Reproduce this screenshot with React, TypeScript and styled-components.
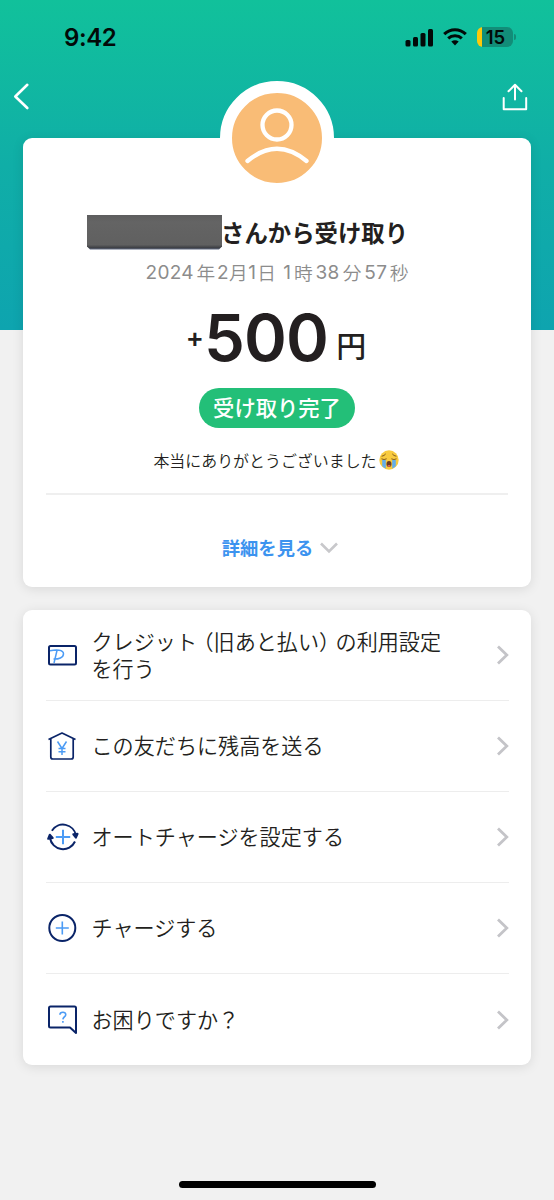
import React from "react";
import styled, { createGlobalStyle } from "styled-components";

const latin = `Inter, "Noto Sans CJK JP", sans-serif`;
const japanese = `"Noto Sans CJK JP", sans-serif`;

const GlobalStyle = createGlobalStyle`
  * { box-sizing: border-box; }
  body { margin: 0; background: #f1f1f1; }
`;

const Screen = styled.div`
  width: 554px;
  height: 1200px;
  display: flex;
  flex-direction: column;
  overflow: hidden;
  font-family: ${japanese};
  color: #231f20;
  background: linear-gradient(#11c19b, #10aea7 50%, #0ea4af) 0 0 / 100% 330px no-repeat #f1f1f1;
`;

const StatusBar = styled.div`
  height: 74px;
  padding: 0 38px 0 64px;
  display: flex;
  align-items: center;
  justify-content: space-between;
  color: #020a08;
`;

const Clock = styled.span`
  font: 600 24px/30px ${latin};
  letter-spacing: -0.4px;
  padding-top: 2px;
`;

const StatusIcons = styled.div`
  display: flex;
  align-items: center;
`;

const Signal = styled.svg`
  display: block;
  margin-right: 9px;
`;

const Wifi = styled.svg`
  display: block;
  margin-right: 10px;
`;

const Battery = styled.div`
  width: 36px;
  height: 20px;
  border-radius: 6px;
  background: linear-gradient(90deg, #fdc90a 5px, #128d78 5px);
  font: 600 18.5px/20px ${latin};
  text-align: center;
  padding-left: 1px;
`;

const BatteryTip = styled.div`
  width: 2px;
  height: 6px;
  margin-left: 1px;
  border-radius: 0 2px 2px 0;
  background: #128d78;
`;

const NavBar = styled.nav`
  height: 64px;
  display: flex;
  justify-content: space-between;
  align-items: flex-start;
  padding: 8px 26px 0 12px;
`;

const IconButton = styled.button`
  border: 0;
  padding: 0;
  background: none;
  display: block;
  line-height: 0;
`;

const Card = styled.section`
  width: 508px;
  margin: 0 auto;
  flex: none;
  background: #fff;
  border-radius: 9px;
  box-shadow: 0 2px 12px rgba(0, 0, 0, 0.1);
`;

const ReceiptCard = styled(Card)`
  height: 449px;
  padding: 0 23px;
  display: flex;
  flex-direction: column;
  align-items: center;
`;

const Avatar = styled.div`
  width: 114px;
  height: 114px;
  flex: none;
  margin-top: -57px;
  border-radius: 50%;
  border: 12px solid #fff;
  background: #f9bc76;
`;

const Sender = styled.h1`
  margin: 17px 0 0;
  align-self: flex-start;
  padding-left: 41px;
  display: flex;
  align-items: center;
  height: 40px;
  font-size: 23.4px;
  font-weight: 700;
  line-height: 40px;
  white-space: nowrap;
`;

const Redaction = styled.span`
  width: 135px;
  height: 35px;
  background: linear-gradient(#5d5d5e, #646464 20%, #606060 85%, #3f4146 93%, #66718e);
  clip-path: polygon(0 0, 100% 0, 100% 32px, 132px 100%, 3px 100%, 0 32px);
`;

const SenderText = styled.span`
  margin: -1px 0 0 -1px;
`;

const DateLine = styled.p`
  margin: 7px 0 0;
  height: 28px;
  display: flex;
  font: 350 18.7px/26px ${japanese};
  color: #8c8c8c;
  white-space: nowrap;
`;

const DateNumber = styled.span<{ $before?: number; $after?: number }>`
  font: 400 19px/28px ${latin};
  letter-spacing: 0.3px;
  margin-left: ${(p) => p.$before ?? 0}px;
  margin-right: ${(p) => p.$after ?? 0}px;
`;

const Amount = styled.div`
  margin-top: 11px;
  height: 80px;
  display: flex;
  align-items: baseline;
  line-height: 80px;
`;

const Plus = styled.span`
  font: 600 27px/80px ${latin};
  position: relative;
  top: -14px;
`;

const Digits = styled.span`
  font: 600 65px/80px ${latin};
  letter-spacing: -0.8px;
`;

const Yen = styled.span`
  font-size: 30px;
  font-weight: 500;
  margin: 0 2px 0 8px;
  position: relative;
  top: -4px;
`;

const Badge = styled.div`
  margin-top: 10px;
  width: 156px;
  height: 40px;
  flex: none;
  border-radius: 20px;
  background: #23bf78;
  color: #fff;
  font-size: 21.3px;
  font-weight: 500;
  line-height: 37px;
  text-align: center;
  white-space: nowrap;
`;

const Message = styled.p`
  margin: 19px 2px 0 0;
  height: 26px;
  display: flex;
  align-items: center;
  gap: 2px;
  font-size: 15.95px;
  font-weight: 350;
  line-height: 26px;
`;

const MessageText = styled.span`
  margin-top: -1px;
`;

const Divider = styled.hr`
  width: 100%;
  height: 2px;
  flex: none;
  margin: 20px 0 0;
  border: 0;
  background: #efefef;
`;

const Details = styled.button`
  border: 0;
  padding: 0;
  background: none;
  margin: 38px 0 0 6px;
  height: 30px;
  display: flex;
  align-items: center;
  gap: 7px;
  font: 700 18.3px/30px ${japanese};
  color: #3c93ef;
`;

const DetailsText = styled.span`
  margin-top: -2px;
`;

const MenuCard = styled(Card)`
  margin-top: 23px;
  height: 455px;
  padding: 0 22px 0 23px;
`;

const MenuRow = styled.a`
  height: 91px;
  display: flex;
  align-items: center;
  border-bottom: 1px solid #ededed;
  &:last-child { border-bottom: 0; }
`;

const MenuIcon = styled.svg`
  width: 34px;
  height: 34px;
  flex: none;
  margin-left: -1px;
  fill: none;
  stroke: #0a2468;
  stroke-width: 2;
  stroke-linejoin: round;
`;

const MenuLabel = styled.span`
  flex: 1;
  margin-left: 12.5px;
  font-size: 21.1px;
  font-weight: 350;
  line-height: 27.4px;
`;

const Paren = styled.span`
  font-feature-settings: "halt";
  margin: 0 6px 0 0;
`;

const OpenParen = styled(Paren)`
  margin: 0 0 0 6px;
`;

const HomeIndicator = styled.div`
  width: 197px;
  height: 7px;
  border-radius: 4px;
  background: #000;
  margin: auto auto 12px;
`;

const Chevron = () => (
  <svg width="14" height="20" viewBox="0 0 14 20" fill="none" stroke="#c4c4c8" strokeWidth="2.8">
    <path d="M3 1.500 11.800 10 3 18.500" />
  </svg>
);

const accent = "#4b9bf5";

const items = [
  {
    icon: (
      <MenuIcon viewBox="0 0 34 34">
        <rect x="4" y="8" width="27" height="18.500" rx="1.500" />
        <path d="M5 12.800c6-1.300 13.500-1.300 13.500 2.900 0 4-5 5.600-10 5.400M12 12.500 9 25" stroke={accent} strokeWidth="1.500" />
      </MenuIcon>
    ),
    label: (
      <>
        クレジット<OpenParen>（</OpenParen>旧あと払い<Paren>）</Paren>の利用設定
        <br />
        を行う
      </>
    ),
  },
  {
    icon: (
      <MenuIcon viewBox="0 0 34 34">
        <path d="M3.500 10.500 17 4l13.500 6.500M5.800 9.800V28q0 2 2 2h18.400q2 0 2-2V9.800" strokeWidth="1.700" />
        <path d="m12.500 12.500 4.500 7 4.500-7M17 19.500V26M13.500 19.500h7M13.500 22.700h7" stroke={accent} strokeWidth="1.500" />
      </MenuIcon>
    ),
    label: "この友だちに残高を送る",
  },
  {
    icon: (
      <MenuIcon viewBox="0 0 34 34">
        <path d="M6.900 10.700A13.200 13.200 0 0 1 31 15.500M30 21.500A13.200 13.200 0 0 1 5 18" />
        <path d="m28.300 14.300 2.600 3.400 1.700-3.900ZM3.200 18.700l1.600-4 2.900 3.200Z" fill="#0a2468" />
        <path d="M18 9.800v14.400M10.800 17h14.400" stroke={accent} />
      </MenuIcon>
    ),
    label: "オートチャージを設定する",
  },
  {
    icon: (
      <MenuIcon viewBox="0 0 34 34">
        <circle cx="17.300" cy="17" r="13" />
        <path d="M17.300 10.500v13M10.800 17h13" stroke={accent} strokeWidth="1.600" />
      </MenuIcon>
    ),
    label: "チャージする",
  },
  {
    icon: (
      <MenuIcon viewBox="0 0 34 34">
        <path d="M5.500 3.500h24q1.500 0 1.500 1.500V30l-6-5.500H5.500Q4 24.500 4 23V5q0-1.500 1.500-1.500Z" />
        <path d="M14.900 11.700c.2-3.400 6.200-3.200 5.800.2-.2 1.900-2.700 2.100-2.800 4.500M17.900 18.100v1.600" stroke={accent} strokeWidth="1.600" />
      </MenuIcon>
    ),
    label: "お困りですか？",
  },
];

const CryingFace = () => (
  <svg width="20" height="20" viewBox="0 0 20 20" fill="none">
    <circle cx="10" cy="10" r="9.700" fill="#f9cb3e" />
    <path d="M3.200 10h3.600v8.500q-2.200-.8-3.600-2.600ZM13.200 10h3.600v5.900q-1.400 1.800-3.600 2.600Z" fill="#63adea" />
    <path d="M2.800 9q2.300 1.300 4.500 0M12.700 9q2.200 1.300 4.500 0M3 6.200q2.300-.3 3.500-2M17 6.200q-2.300-.3-3.500-2" stroke="#76501b" strokeWidth="0.900" strokeLinecap="round" />
    <ellipse cx="10" cy="14" rx="2.500" ry="2.900" fill="#6b3c20" />
    <path d="M8.300 15.700q1.700-1.500 3.400 0-.6 1-1.700 1t-1.700-1Z" fill="#ec6760" />
  </svg>
);

export default function App() {
  return (
    <Screen>
      <GlobalStyle />
      <StatusBar>
        <Clock>9:42</Clock>
        <StatusIcons>
          <Signal width="29" height="19" viewBox="0 0 29 19" fill="currentColor">
            <rect x="0.500" y="12" width="5" height="6.500" rx="1.500" />
            <rect x="8" y="9" width="5" height="9.500" rx="1.500" />
            <rect x="15.500" y="5" width="5" height="13.500" rx="1.500" />
            <rect x="23" y="1" width="5" height="17.500" rx="1.500" />
          </Signal>
          <Wifi width="24" height="18" viewBox="0 0 24 18" fill="none" stroke="currentColor" strokeWidth="3.100">
            <path d="M1.200 6.200Q6 1.700 12 1.700t10.800 4.500M5.200 10.300Q8 7.800 12 7.800t6.800 2.500" />
            <path d="M8.300 13.600Q12 10.700 15.700 13.600L12 17.500Z" fill="currentColor" stroke="none" />
          </Wifi>
          <Battery>15</Battery>
          <BatteryTip />
        </StatusIcons>
      </StatusBar>
      <NavBar>
        <IconButton aria-label="戻る">
          <svg width="20" height="30" viewBox="0 0 20 30" fill="none" stroke="#fff" strokeWidth="2.600" strokeLinecap="round" strokeLinejoin="round">
            <path d="M15.300 2.800 3.300 14.500l12 11.500" />
          </svg>
        </IconButton>
        <IconButton aria-label="共有">
          <svg width="26" height="30" viewBox="0 0 26 30" fill="none" stroke="#fff" strokeWidth="2" strokeLinecap="round" strokeLinejoin="round">
            <path d="M1.700 16v11.300h22.500V16M13 17.500V3M6.500 9.300 13 2.800l6.500 6.500" />
          </svg>
        </IconButton>
      </NavBar>
      <ReceiptCard>
        <Avatar>
          <svg width="90" height="90" viewBox="0 0 90 90" fill="none" stroke="#fff" strokeWidth="4.300" strokeLinecap="round">
            <circle cx="45" cy="32" r="14.500" />
            <path d="M15.500 68q29.500-24.500 59 0" />
          </svg>
        </Avatar>
        <Sender>
          <Redaction />
          <SenderText>さんから受け取り</SenderText>
        </Sender>
        <DateLine>
          <DateNumber $after={2.5}>2024</DateNumber>年
          <DateNumber $before={2}>2</DateNumber>月
          <DateNumber $before={0.5} $after={1}>1</DateNumber>日
          <DateNumber $before={7.5} $after={2.5}>1</DateNumber>時
          <DateNumber $before={3} $after={3}>38</DateNumber>分
          <DateNumber $before={3} $after={2.5}>57</DateNumber>秒
        </DateLine>
        <Amount>
          <Plus>+</Plus>
          <Digits>500</Digits>
          <Yen>円</Yen>
        </Amount>
        <Badge>受け取り完了</Badge>
        <Message>
          <MessageText>本当にありがとうございました</MessageText>
          <CryingFace />
        </Message>
        <Divider />
        <Details>
          <DetailsText>詳細を見る</DetailsText>
          <svg width="18" height="12" viewBox="0 0 18 12" fill="none" stroke="#c8c8cb" strokeWidth="2.600">
            <path d="m1 1.500 8 8 8-8" />
          </svg>
        </Details>
      </ReceiptCard>
      <MenuCard>
        {items.map((item, index) => (
          <MenuRow key={index}>
            {item.icon}
            <MenuLabel>{item.label}</MenuLabel>
            <Chevron />
          </MenuRow>
        ))}
      </MenuCard>
      <HomeIndicator />
    </Screen>
  );
}
